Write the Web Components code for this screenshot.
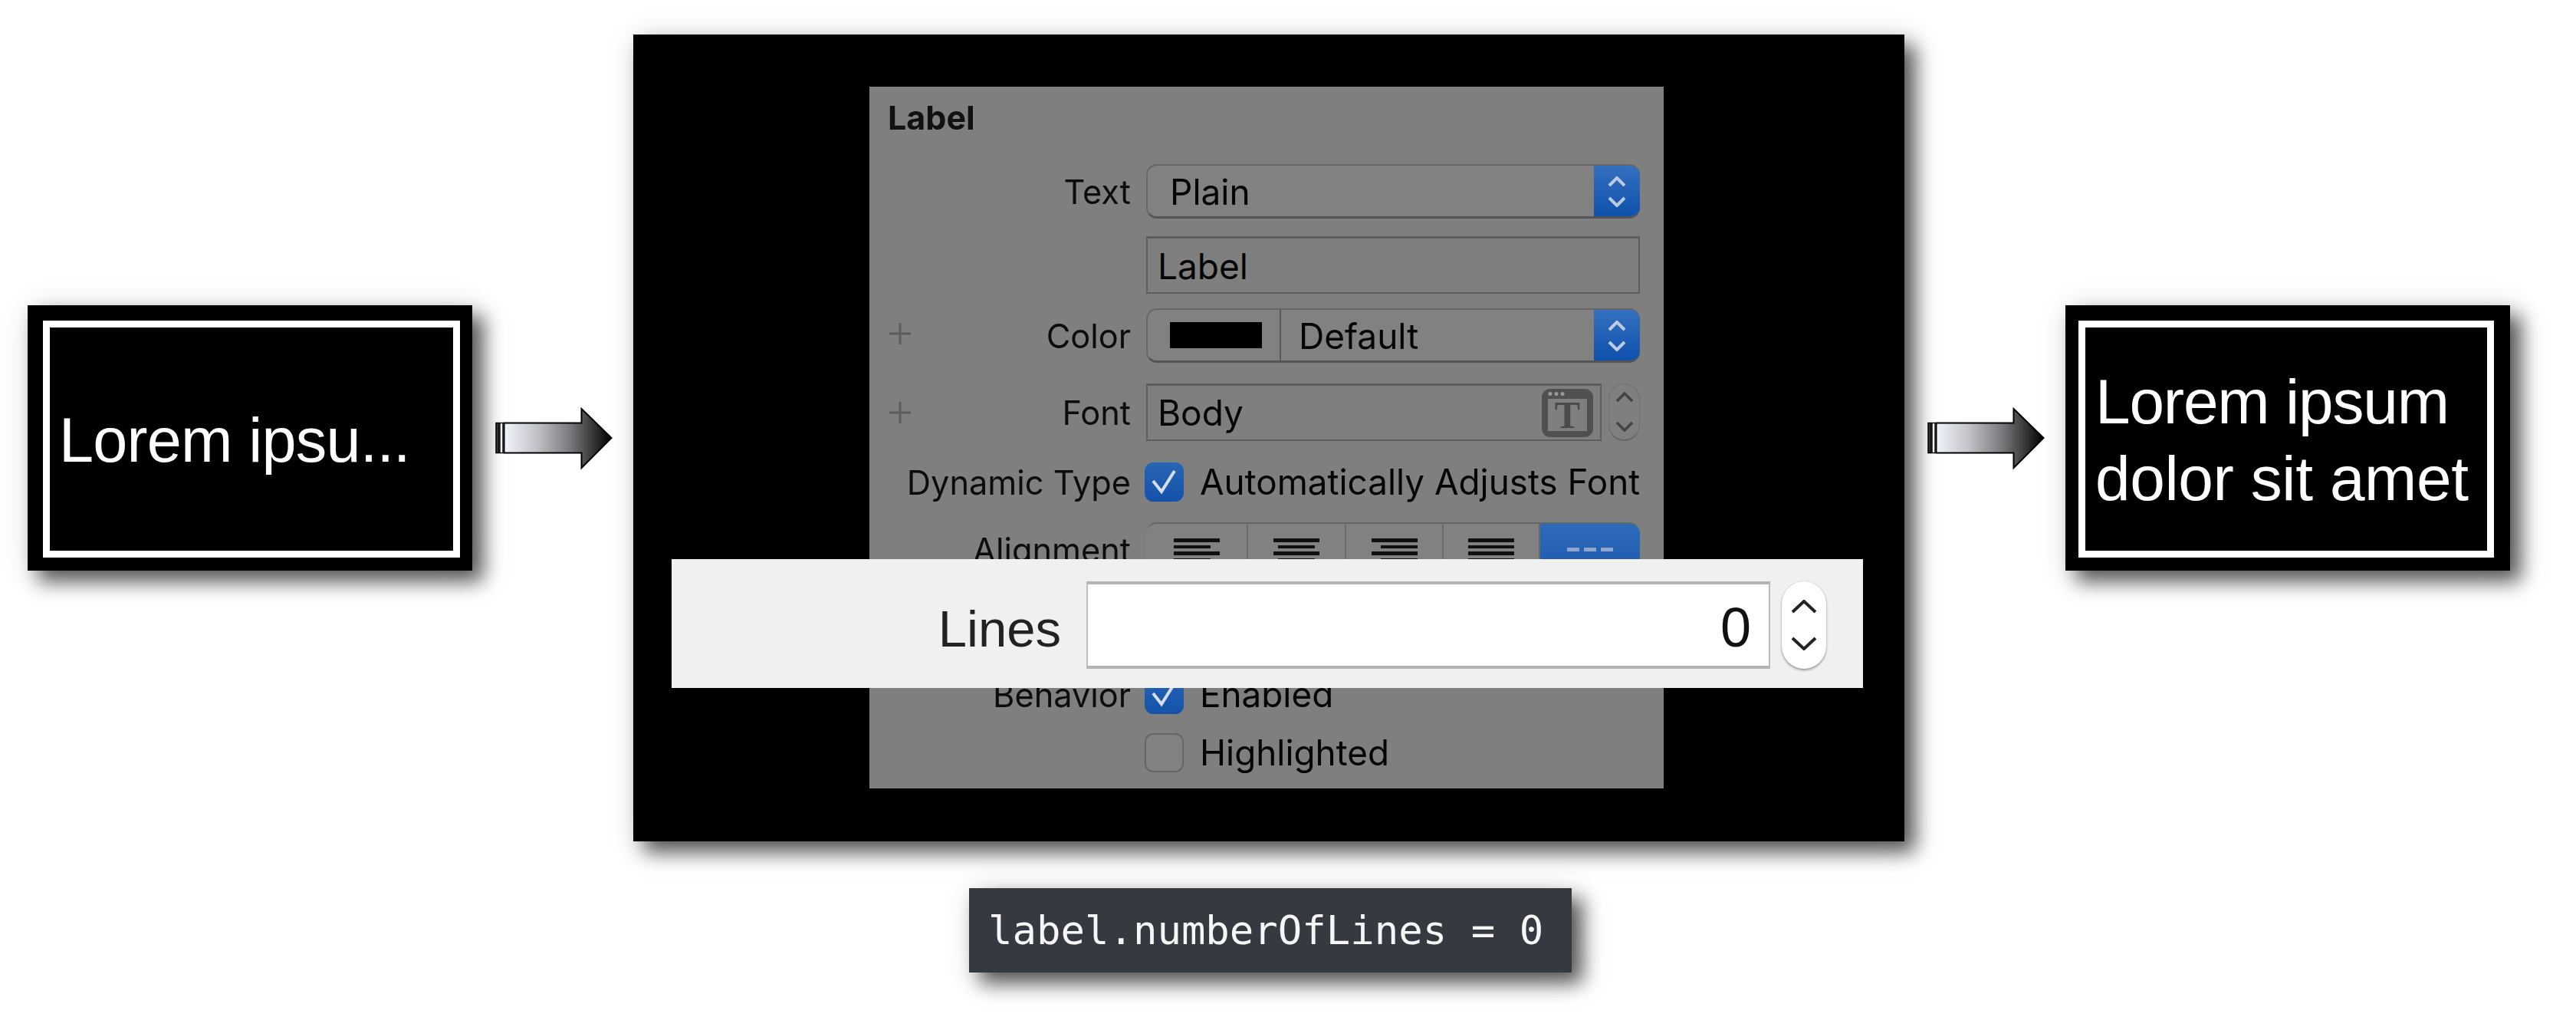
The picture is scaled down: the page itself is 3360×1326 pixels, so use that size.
<!DOCTYPE html>
<html><head><meta charset="utf-8">
<style>
html,body{margin:0;padding:0;background:#fff;}
body{width:3360px;height:1326px;overflow:hidden;font-family:"Liberation Sans",Arial,sans-serif;}
</style></head><body>
<diagram-stage>
  <label-box style="--pad:20px 16px 17px 20px;--tpad:12px;--fs:81px;--ls:-.8px;--tt:2px"><span>Lorem ipsu...</span></label-box>
  <flow-arrow style="--ml:30px"></flow-arrow>
  <dark-stage>
    <insp-panel>
      <insp-title>Label</insp-title>
      <insp-row label="Text" h="71" mt="0"><pop-up>Plain</pop-up></insp-row>
      <insp-row h="75" mt="23"><text-field>Label</text-field></insp-row>
      <insp-row label="Color" plus="5" h="71" mt="19"><pop-up swatch>Default</pop-up></insp-row>
      <insp-row label="Font" plus="0" h="75" mt="27"><font-field>Body</font-field></insp-row>
      <insp-row label="Dynamic Type" h="51" mt="28"><check-box checked>Automatically Adjusts Font</check-box></insp-row>
      <insp-row label="Alignment" h="71" mt="27"><seg-control></seg-control></insp-row>
      <insp-row label="Behavior" h="51" mt="128"><check-box checked>Enabled</check-box></insp-row>
      <insp-row h="51" mt="25"><check-box>Highlighted</check-box></insp-row>
    </insp-panel>
    <lines-callout slot="over"></lines-callout>
  </dark-stage>
  <flow-arrow style="--ml:30px"></flow-arrow>
  <label-box style="--pad:20px 21px 17px 17px;--tpad:13px;--fs:82px;--ls:-.4px;--tt:2px"><span><span style="letter-spacing:-1.2px">Lorem ipsum</span><br>dolor sit amet</span></label-box>
  <code-chip>label.numberOfLines = 0</code-chip>
</diagram-stage>
<script>
const UI='Inter,"Liberation Sans",Arial,sans-serif';
const def=(name,css,html,setup)=>customElements.define(name,class extends HTMLElement{
  connectedCallback(){ if(this.shadowRoot)return; const r=this.attachShadow({mode:'open'});
    r.innerHTML=`<style>${css}</style>${typeof html==='function'?html(this):html}`; if(setup)setup(this,r);}
});
const SHADOW='box-shadow:14px 14px 24px rgba(0,0,0,.64),4px 4px 40px rgba(0,0,0,.12);';
const chevUp=(c,w)=>`<polyline points="2,12 12,2 22,12" fill="none" stroke="${c}" stroke-width="${w}"/>`;
const chevDn=(c,w)=>`<polyline points="2,2 12,12 22,2" fill="none" stroke="${c}" stroke-width="${w}"/>`;
const chevs=(c,w,gap)=>`<svg width="24" height="14" viewBox="0 0 24 14">${chevUp(c,w)}</svg><svg width="24" height="14" viewBox="0 0 24 14" style="margin-top:${gap}px">${chevDn(c,w)}</svg>`;

def('diagram-stage',`:host{display:grid;grid-template-columns:580px 210px 1658px 210px 580px;padding:45px 0 0 36px;align-items:center;width:max-content}`,`<slot></slot>`);

def('label-box',`:host{display:block;box-sizing:border-box;width:580px;height:346px;background:#000;padding:var(--pad);${SHADOW}}
 .in{box-sizing:border-box;height:100%;border:9px solid #fff;display:flex;align-items:center;padding:var(--tt) 0 0 var(--tpad);color:#fff;font:300 var(--fs)/100px "Liberation Sans",Arial,sans-serif;letter-spacing:var(--ls);white-space:nowrap}`,
 `<div class="in"><slot></slot></div>`);

let aid=0;
def('flow-arrow',`:host{display:block;width:153px;height:82px;margin-left:var(--ml);margin-top:2px}svg{display:block}`,()=>{const id='g'+(++aid);return `<svg width="153" height="82" viewBox="0 0 153 82">
 <defs><linearGradient id="${id}" gradientUnits="userSpaceOnUse" x1="11" y1="0" x2="152" y2="0"><stop offset="0" stop-color="#f2f4fb"/><stop offset=".3" stop-color="#c2c4ca"/><stop offset=".62" stop-color="#77787b"/><stop offset="1" stop-color="#000"/></linearGradient></defs>
 <rect x="1" y="20.5" width="4" height="39" fill="#333" stroke="#000" stroke-width="1.5"/>
 <rect x="6" y="20.5" width="4" height="39" fill="#fff" stroke="#111" stroke-width="1.5"/>
 <path d="M11.5 20.5H112.5V2L151.5 40L112.5 79V59.5H11.5Z" fill="url(#${id})" stroke="#000" stroke-width="2"/></svg>`});

def('dark-stage',`:host{display:block;position:relative;box-sizing:border-box;width:1658px;height:1052px;background:#000;padding:68px 314px 69px 308px;${SHADOW}}
 .over{position:absolute;left:50px;top:684px}`,`<slot></slot><div class="over"><slot name="over"></slot></div>`);

def('insp-panel',`:host{display:block;height:915px;background:#7f7f7f;color:#0a0a0a;overflow:hidden;font:43px/1 ${UI}}
 .b{filter:blur(.6px)}`,`<div class="b"><slot></slot></div>`);

def('insp-title',`:host{display:block;height:101px;box-sizing:border-box;padding:16px 0 0 24px;font:bold 43px/1.15 ${UI};color:#111}`,`<slot></slot>`);

def('insp-row',`:host{display:grid;grid-template-columns:341px 644px;column-gap:20px;align-items:stretch}
 .l{display:flex;justify-content:space-between;align-items:center;white-space:nowrap;font-size:43.3px;color:#0c0c0c}
 .p{margin-left:25px;width:30px;height:30px}
 .t{margin-left:auto;padding-top:2px}
 .c{display:block}`,el=>{
   const plus=el.hasAttribute('plus')?`<svg class="p" style="margin-bottom:${el.getAttribute('plus')}px" viewBox="0 0 30 30"><path d="M15 1V29M1 15H29" stroke="#5c5c5c" stroke-width="3" fill="none"/></svg>`:'';
   return `<div class="l">${plus}<span class="t">${el.getAttribute('label')||''}</span></div><div class="c"><slot></slot></div>`;
 },el=>{el.style.height=el.getAttribute('h')+'px';el.style.marginTop=el.getAttribute('mt')+'px';});

def('pop-up',`:host{display:flex;height:100%;box-sizing:border-box;border-radius:14px;border-bottom:3px solid #545454;border-top:2px solid #656565;border-left:2px solid #6a6a6a;background:#818181;overflow:hidden;font-size:46px;color:#050505}
 .tx{flex:1;display:flex;align-items:center;padding:2px 0 0 29px}
 .sw{width:174px;flex:none;display:flex;align-items:center;border-right:2px solid #585858;box-sizing:border-box}
 .sw i{display:block;width:120px;height:34px;background:#000;margin-left:29px}
 .bl{width:60px;flex:none;margin:-2px 0 -3px;background:linear-gradient(#3571bf,#0d4fab);display:flex;flex-direction:column;align-items:center;justify-content:center}`,
 el=>`${el.hasAttribute('swatch')?'<div class="sw"><i></i></div>':''}<div class="tx" style="${el.hasAttribute('swatch')?'padding-left:23px':''}"><slot></slot></div><div class="bl">${chevs('#bccbe2',4,12)}</div>`);

def('text-field',`:host{display:flex;align-items:center;height:100%;box-sizing:border-box;border:2px solid #5e5e5e;border-top-width:3px;padding:2px 0 0 13px;font-size:46px;color:#050505;background:#7f7f7f}`,`<slot></slot>`);

def('font-field',`:host{display:flex;height:100%;font-size:46px;color:#050505;gap:9px}
 .f{box-sizing:border-box;width:594px;display:flex;align-items:center;justify-content:space-between;border:2px solid #5e5e5e;border-top-width:3px;padding:0 9px 0 13px}
 svg.t{display:block}
 .s{flex:1;border-radius:22px;border:1px solid #6f6f6f;border-bottom:2px solid #666;display:flex;flex-direction:column;align-items:center;justify-content:center;box-sizing:border-box}
 text{font:bold 50px "Liberation Serif",serif;fill:#4a4a4a}`,
 `<div class="f"><slot></slot><svg class="t" width="67" height="63" viewBox="0 0 67 63"><rect x="0" y="0" width="67" height="63" rx="11" fill="#505050"/><rect x="8" y="13" width="51" height="42" fill="#7f7f7f"/><circle cx="11" cy="6.5" r="2.5" fill="#999"/><circle cx="19" cy="6.5" r="2.5" fill="#999"/><circle cx="27" cy="6.5" r="2.5" fill="#999"/><text x="33.5" y="51" text-anchor="middle">T</text></svg></div>
 <div class="s">${chevs('#444',3.5,24)}</div>`);

def('check-box',`:host{display:flex;align-items:center;height:100%;gap:21px;margin-left:-2px;white-space:nowrap;font-size:45.8px;color:#050505}
 .b{width:51px;height:51px;box-sizing:border-box;border-radius:11px;flex:none}
 .on{background:linear-gradient(#2865b6,#1352a8)}
 .off{border:2px solid #666;background:#828282}
 svg{display:block}`,
 el=>`<div class="b ${el.hasAttribute('checked')?'on':'off'}">${el.hasAttribute('checked')?'<svg width="51" height="51" viewBox="0 0 51 51"><path d="M11 24L22 38L39 11" fill="none" stroke="#d5deea" stroke-width="4"/></svg>':''}</div><span><slot></slot></span>`);

def('seg-control',`:host{display:grid;grid-template-columns:133px 128px 127px 126px 130px;height:100%;box-sizing:border-box;border-radius:14px;background:#818181;border-top:2px solid #656565;overflow:hidden}
 div{display:flex;flex-direction:column;gap:4px;padding-top:19px;box-sizing:border-box;border-right:2px solid #6a6a6a;align-items:center}
 i{display:block;width:60px;height:4.5px;background:#111}
 .a i:nth-child(even){width:48px;margin-right:12px}.c i:nth-child(even){width:48px}.r i:nth-child(even){width:48px;margin-left:12px}
 .bl{background:linear-gradient(#2f6bbb,#1a59ae);border:none;flex-direction:row;justify-content:center;align-items:flex-start;padding-top:31px;gap:6px}
 .bl i{width:16px;height:5px;background:#8fa6cc}`,
 `<div class="a"><i></i><i></i><i></i><i></i></div><div class="c"><i></i><i></i><i></i><i></i></div><div class="r"><i></i><i></i><i></i><i></i></div><div class="j"><i></i><i></i><i></i><i></i></div><div class="bl"><i></i><i></i><i></i></div>`);

def('lines-callout',`:host{display:grid;grid-template-columns:508px 892px 58px;align-items:center;box-sizing:border-box;width:1554px;height:168px;background:#f0f0f0;padding:29px 0 25px 33px}
 .l{font:67px/1 "Liberation Sans",Arial,sans-serif;color:#222;text-align:right;padding:8px 33px 0 0;filter:blur(.5px)}
 .i{box-sizing:border-box;height:114px;background:#fff;border:2px solid #bdbdbd;border-top:4px solid #b4b4b4;border-bottom:4px solid #b4b4b4;font:72px/1 "Liberation Sans",Arial,sans-serif;color:#111;text-align:right;padding:20px 23px 0 0;filter:blur(.4px)}
 .s{box-sizing:border-box;height:114px;margin-left:15px;width:58px;background:#fff;border-radius:29px;box-shadow:0 2px 3px rgba(0,0,0,.35),0 0 1px rgba(0,0,0,.3);display:flex;flex-direction:column;align-items:center;justify-content:center}`,
 `<div class="l">Lines</div><div class="i">0</div><div class="s"><svg width="34" height="18" viewBox="0 0 34 18"><polyline points="2,16 17,2 32,16" fill="none" stroke="#222" stroke-width="4"/></svg><svg width="34" height="18" viewBox="0 0 34 18" style="margin-top:30px"><polyline points="2,2 17,16 32,2" fill="none" stroke="#222" stroke-width="4"/></svg></div>`);

def('code-chip',`:host{display:block;grid-column:3;justify-self:start;margin:61px 0 0 438px;box-sizing:border-box;width:786px;height:110px;background:#343a40;color:#f6f6f6;padding:0 0 0 25px;white-space:nowrap;font:52.3px/110px "DejaVu Sans Mono","Liberation Mono",monospace;${SHADOW}}`,`<slot></slot>`);
</script>
</body></html>
